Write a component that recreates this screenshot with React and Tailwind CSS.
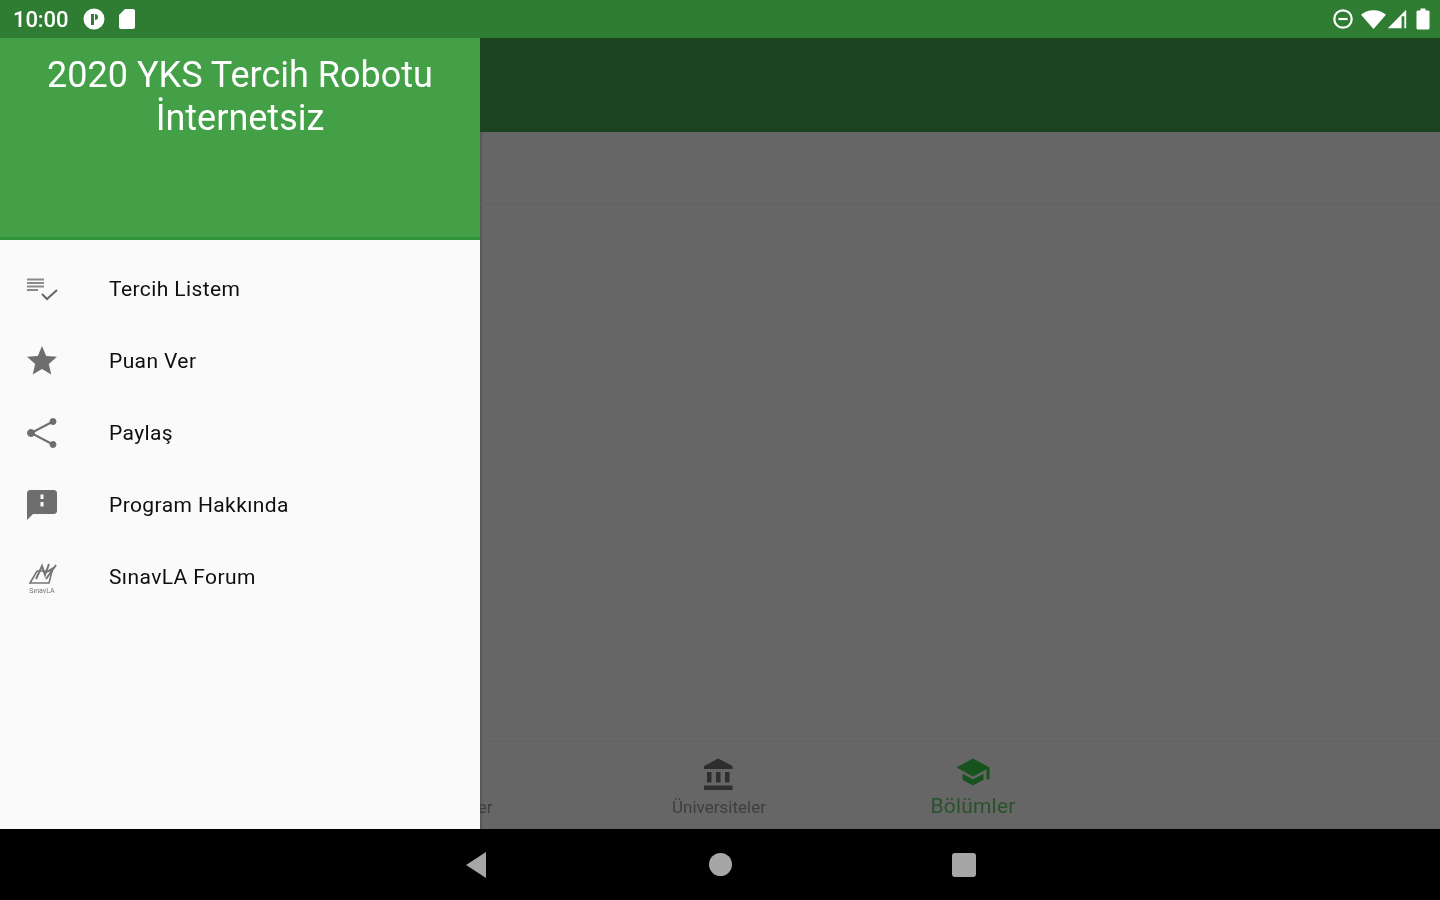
const menu = [
  { label: 'Tercih Listem', icon: 'list' },
  { label: 'Puan Ver', icon: 'star' },
  { label: 'Paylaş', icon: 'share' },
  { label: 'Program Hakkında', icon: 'info' },
  { label: 'SınavLA Forum', icon: 'forum' },
];

const paths = {
  star: 'M12 17.27L18.18 21l-1.64-7.03L22 9.24l-7.19-.61L12 2 9.19 8.63 2 9.24l5.46 4.73L5.82 21z',
  info: 'M20 2H4c-1.1 0-1.99.9-1.99 2L2 22l4-4h14c1.1 0 2-.9 2-2V4c0-1.1-.9-2-2-2zm-7 6h-2V5h2v3zm0 5h-2v-3h2v3z',
};

function MenuIcon({ name }) {
  if (name === 'list') {
    return (
      <svg viewBox="0 0 36 36" className="w-9 h-9 text-[#8a8a8a]" fill="none" stroke="currentColor">
        <path d="M3 8.500H20M3 12H20M3 15.500H20M3 19H14" strokeWidth="2" />
        <path d="M18 23L23 28L33 19" strokeWidth="2" stroke="#666666" />
      </svg>
    );
  }
  if (name === 'share') {
    return (
      <svg viewBox="0 0 36 36" className="w-9 h-9 text-[#6e6e6e]" fill="currentColor" stroke="currentColor">
        <path d="M29 6.500L7 18L29 29.500" fill="none" strokeWidth="2" />
        <circle cx="29" cy="6.500" r="3" />
        <circle cx="7" cy="18" r="3.500" />
        <circle cx="29" cy="29.500" r="3" />
      </svg>
    );
  }
  if (name === 'forum') {
    return (
      <svg viewBox="0 0 36 36" className="w-9 h-9 text-[#757575]" fill="none" stroke="currentColor">
        <path d="M6 24L13 12H28L25 24Z" strokeWidth="1.6" />
        <path d="M12 20L18 7L21 16L25 5M21 14L31 8M22 20L32 6" strokeWidth="2" />
        <text x="18" y="34" textAnchor="middle" fontSize="7" fill="currentColor" stroke="none">SınavLA</text>
      </svg>
    );
  }
  return (
    <svg viewBox="0 0 24 24" className="w-9 h-9 text-[#6e6e6e]" fill="currentColor">
      <path d={paths[name]} />
    </svg>
  );
}

function StatusBar() {
  return (
    <div className="h-[38px] bg-[#2e7d32] flex items-center justify-between pl-[13px] pr-[5px] text-white shrink-0">
      <div className="flex items-center blur-[0.7px]">
        <span className="text-[22px] w-[57px] tracking-[-0.1px] font-medium">10:00</span>
        <svg viewBox="0 0 24 24" className="w-6 h-6 ml-[12px]" fill="currentColor">
          <path fillRule="evenodd" d="M12 1.500a10.500 10.500 0 1 0 0 21 10.500 10.500 0 0 0 0-21zM9 7h3v11H9zM13 7a3 3 0 0 1 0 6z" />
        </svg>
        <svg viewBox="0 0 24 24" className="w-6 h-6 ml-[9px]" fill="currentColor">
          <path d="M18 2h-8L4 8v12c0 1.100.9 2 2 2h12c1.100 0 2-.9 2-2V4c0-1.100-.9-2-2-2z" />
        </svg>
      </div>
      <div className="flex items-center blur-[0.7px]">
        <svg viewBox="0 0 24 24" className="w-[22px] h-[22px]" fill="none" stroke="currentColor" strokeWidth="2.4">
          <circle cx="12" cy="12" r="9.500" />
          <path d="M7 12h10" />
        </svg>
        <svg viewBox="0 0 24 24" className="w-[25px] h-[25px] ml-[7px]" fill="currentColor">
          <path d="M12 21L0 7.500C3 4.800 7.200 3 12 3s9 1.800 12 4.500z" />
        </svg>
        <svg viewBox="0 0 24 24" className="w-[22px] h-[22px]" fill="currentColor">
          <path d="M22 2L2 22h15V9h3v13h2z" />
        </svg>
        <svg viewBox="0 0 24 24" className="w-6 h-6 ml-[3px]" fill="currentColor">
          <path d="M17 3.500H14.500V1.500h-5v2H7C6 3.500 5.500 4.100 5.500 5v16c0 .9.500 1.500 1.500 1.500h10c1 0 1.500-.6 1.500-1.500V5c0-.9-.5-1.500-1.500-1.500z" />
        </svg>
      </div>
    </div>
  );
}

function Drawer() {
  return (
    <div className="w-[480px] shrink-0 bg-[#fafafa] flex flex-col">
      <div className="h-[202px] bg-[#43a047] border-b-[3px] border-[#2f9138] pt-[16px] text-center text-white text-[36px] leading-[43px]">
        <div className="blur-[0.6px]">
          2020 YKS Tercih Robotu
          <br />
          İnternetsiz
        </div>
      </div>
      <div className="pt-[13px]">
        {menu.map((item) => (
          <div key={item.label} className="h-[72px] flex items-center pl-[24px] blur-[0.6px]">
            <MenuIcon name={item.icon} />
            <span className="ml-[49px] pt-[1px] text-[21px] tracking-[0.4px] text-[#0f0f0f]">{item.label}</span>
          </div>
        ))}
      </div>
    </div>
  );
}

function Main() {
  return (
    <div className="flex-1 min-w-0 flex flex-col bg-[#666666] overflow-hidden shadow-[inset_3px_0_3px_-2px_rgba(0,0,0,0.25)]">
      <div className="h-[94px] bg-[#1b431f] shrink-0" />
      <div className="h-[73px] border-b border-[#616161] shrink-0" />
      <div className="flex-1" />
      <div className="h-[88px] border-t border-[#626262] shrink-0 flex -ml-[142px] blur-[0.7px]">
        <div className="w-[254px] flex flex-col items-center pt-[50px] pr-[10px]">
          <span className="text-[17px] leading-[30px] text-[#3e3e3e]">Tercihler</span>
        </div>
        <div className="w-[254px] flex flex-col items-center pt-[15px]">
          <svg viewBox="0 0 24 24" className="w-9 h-9 text-[#2e2e2e]" fill="currentColor">
            <path d="M4 10v7h3v-7H4zm6 0v7h3v-7h-3zM2 22h19v-3H2v3zm14-12v7h3v-7h-3zm-4.500-9L2 6v2h19V6l-9.500-5z" />
          </svg>
          <span className="text-[17px] leading-[22px] mt-[3px] text-[#3e3e3e]">Üniversiteler</span>
        </div>
        <div className="w-[254px] flex flex-col items-center pt-[12px]">
          <svg viewBox="0 0 24 24" className="w-9 h-9 text-[#17531c]" fill="currentColor">
            <path d="M5 13.180v4L12 21l7-3.820v-4L12 17l-7-3.820zM12 3L1 9l11 6 9-4.910V17h2V9L12 3z" />
          </svg>
          <span className="text-[21px] leading-[22px] mt-[5px] tracking-[0.2px] text-[#27522b]">Bölümler</span>
        </div>
      </div>
    </div>
  );
}

function NavBar() {
  return (
    <div className="h-[71px] bg-black shrink-0 flex items-center justify-center text-[#a6a6a6]">
      <svg viewBox="0 0 24 28" className="w-6 h-7 -translate-x-[1px]" fill="currentColor">
        <path d="M22 1V27L2 14Z" />
      </svg>
      <div className="w-[23px] h-[23px] rounded-full bg-[#a6a6a6] ml-[220px]" />
      <div className="w-6 h-6 rounded-[3px] bg-[#a6a6a6] ml-[220px]" />
    </div>
  );
}

export default function App() {
  return (
    <div className="w-[1440px] h-[900px] flex flex-col overflow-hidden font-['Roboto',sans-serif]">
      <StatusBar />
      <div className="flex-1 flex min-h-0">
        <Drawer />
        <Main />
      </div>
      <NavBar />
    </div>
  );
}
